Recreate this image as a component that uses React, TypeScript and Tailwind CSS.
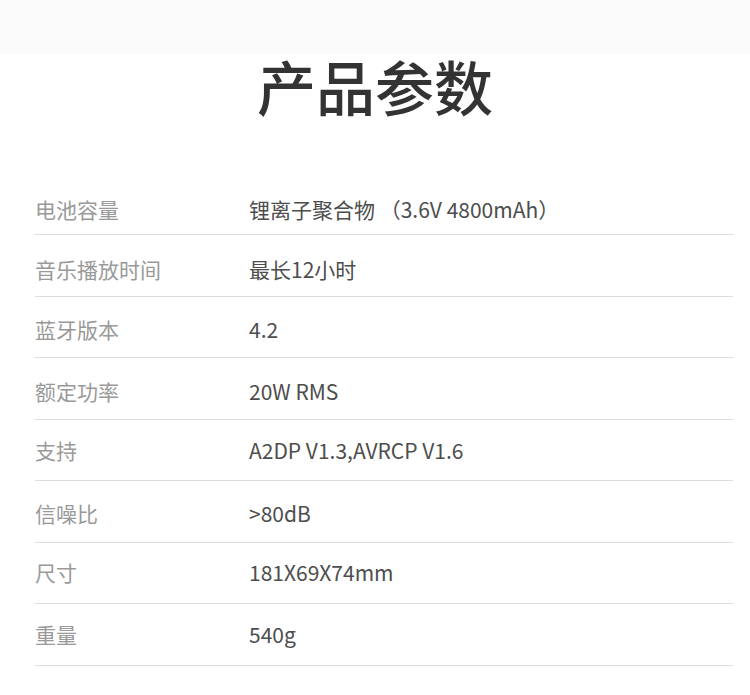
import React from "react";

const rows: { label: string; value: string; h: string; pb: string }[] = [
  { label: "电池容量", value: "锂离子聚合物 （3.6V 4800mAh）", h: "h-[61px]", pb: "pb-[11px]" },
  { label: "音乐播放时间", value: "最长12小时", h: "h-[62px]", pb: "pb-[13px]" },
  { label: "蓝牙版本", value: "4.2", h: "h-[61px]", pb: "pb-[14px]" },
  { label: "额定功率", value: "20W RMS", h: "h-[62px]", pb: "pb-[14px]" },
  { label: "支持", value: "A2DP V1.3,AVRCP V1.6", h: "h-[61px]", pb: "pb-[16px]" },
  { label: "信噪比", value: ">80dB", h: "h-[62px]", pb: "pb-[15px]" },
  { label: "尺寸", value: "181X69X74mm", h: "h-[61px]", pb: "pb-[17px]" },
  { label: "重量", value: "540g", h: "h-[62px]", pb: "pb-[17px]" },
];

export default function App() {
  return (
    <div
      className="w-[750px] h-[695px] bg-white overflow-hidden"
      style={{ fontFamily: '"Noto Sans CJK SC", "Noto Sans", sans-serif' }}
    >
      <div className="h-[54px] bg-[#fafafa]" />
      <div className="h-[120px] flex justify-center">
        <h1 className="text-[59px] leading-[70px] mt-[-3px] font-medium text-[#333333]">
          产品参数
        </h1>
      </div>
      <div className="mx-[35px] w-[698px]">
        {rows.map((r) => (
          <div
            key={r.label}
            className={`${r.h} ${r.pb} flex items-end border-b border-[#dddddd] text-[21px] leading-[28px]`}
          >
            <div className="w-[214px] text-[#999999]">{r.label}</div>
            <div className="text-[#4d4d4d]">{r.value}</div>
          </div>
        ))}
      </div>
    </div>
  );
}
